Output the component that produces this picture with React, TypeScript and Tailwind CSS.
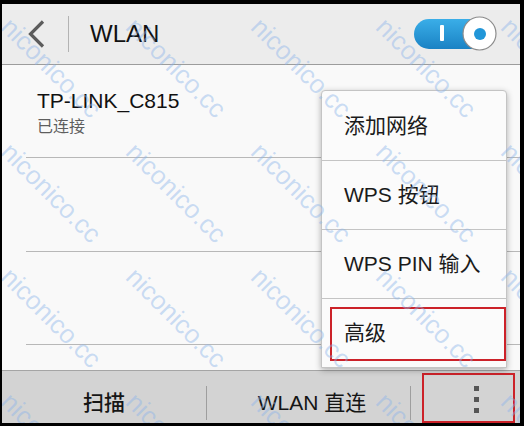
import React from 'react';

const font = { fontFamily: '"Liberation Sans", Arial, "Noto Sans CJK SC", sans-serif' };

const marks: { x: number; y: number }[] = [];
for (let r = 0; r < 4; r++) {
    for (let c = 0; c < 5; c++) {
        marks.push({ x: 13 + c * 125, y: 9 + r * 125 });
    }
}

function Toggle() {
    return (
        <svg width="84" height="36" viewBox="0 0 84 36">
            <defs>
                <linearGradient id="pill" x1="0" y1="0" x2="0" y2="1">
                    <stop offset="0" stopColor="#3aaee8" />
                    <stop offset="1" stopColor="#1a82c4" />
                </linearGradient>
            </defs>
            <rect x="0" y="3" width="72" height="30" rx="15" fill="url(#pill)" />
            <rect x="26" y="9" width="4" height="16" rx="1" fill="#ffffff" />
            <circle cx="65.5" cy="17.5" r="16.5" fill="#ffffff" stroke="#8c8c8c" strokeWidth="1.2" />
            <circle cx="66" cy="18" r="6" fill="#2196d8" />
        </svg>
    );
}

export default function App() {
    return (
        <div className="w-[524px] h-[426px] bg-black pt-[4px] pl-[2px] pr-[4px] pb-[3px]" style={font}>
            <div className="relative w-full h-full flex flex-col overflow-hidden bg-[#f9f9f9]">
                {/* Header */}
                <div className="h-[61px] shrink-0 flex items-center bg-[#ececec] border-b border-[#9c9c9c]">
                    <svg className="ml-[25px]" width="18" height="28" viewBox="0 0 18 28">
                        <path d="M16 1.5 L3.5 14 L16 26.5" fill="none" stroke="#5c5c5c" strokeWidth="3.2" strokeLinejoin="miter" />
                    </svg>
                    <div className="ml-[23px] w-px h-[36px] bg-[#b3b3b3]" />
                    <span className="ml-[21px] text-[24px] leading-none text-[#111]">WLAN</span>
                    <div className="flex-1" />
                    <div className="mr-[22px]">
                        <Toggle />
                    </div>
                </div>

                {/* List */}
                <div className="flex-1 relative">
                    <div className="h-[92px] pl-[35px] pt-[24px]">
                        <div className="text-[21px] leading-[24px] text-[#111]">TP-LINK_C815</div>
                        <div className="mt-[4px] text-[16px] leading-[20px] text-[#5e5e5e]">已连接</div>
                    </div>
                    <div className="ml-[24px] h-px bg-[#b8b8b8]" />
                    <div className="h-[93px]" />
                    <div className="ml-[24px] h-px bg-[#b8b8b8]" />
                    <div className="h-[92px]" />
                    <div className="ml-[24px] h-px bg-[#b8b8b8]" />
                </div>

                {/* Bottom bar */}
                <div className="h-[53px] shrink-0 flex items-end bg-[#d3d3d3] border-t border-[#a5a5a5] text-[21px] text-[#151515]">
                    <div className="w-[204px] h-full flex items-center justify-center pt-[12px] font-medium">扫描</div>
                    <div className="w-px h-[34px] mb-[3px] bg-[#9e9e9e]" />
                    <div className="w-[203px] h-full flex items-center justify-center pt-[12px] pl-[7px]">WLAN 直连</div>
                    <div className="w-px h-[34px] mb-[3px] bg-[#9e9e9e]" />
                    <div className="relative flex-1 h-full flex flex-col items-center justify-center gap-[6px] pl-[21px] pt-[4px]">
                        <div className="w-[5px] h-[5px] bg-[#555]" />
                        <div className="w-[5px] h-[5px] bg-[#555]" />
                        <div className="w-[5px] h-[5px] bg-[#555]" />
                        <div className="absolute left-[11px] right-[5px] top-[2px] bottom-0 border-2 border-[#cc2229]" />
                    </div>
                </div>

                {/* Overflow menu */}
                <div className="absolute left-[319px] top-[86px] w-[186px] bg-[#fbfbfb] border border-[#c4c4c4] rounded-t-[4px] shadow-[0_2px_6px_rgba(0,0,0,0.3)] text-[21px] text-[#1a1a1a]">
                    <div className="h-[69px] flex items-center pl-[22px]">添加网络</div>
                    <div className="h-[69px] flex items-center pl-[22px] border-t border-[#c4c4c4]">WPS 按钮</div>
                    <div className="h-[69px] flex items-center pl-[22px] border-t border-[#c4c4c4]">WPS PIN 输入</div>
                    <div className="relative h-[69px] flex items-center pl-[22px] border-t border-[#c4c4c4]">
                        高级
                        <div className="absolute left-[8px] right-0 top-[8px] bottom-[6px] border-2 border-[#cc2229]" />
                    </div>
                </div>

                {/* Watermark */}
                <div className="absolute inset-0 pointer-events-none">
                    {marks.map((m, i) => (
                        <span
                            key={i}
                            className="absolute origin-top-left rotate-45 whitespace-nowrap text-[26px] leading-none text-[#8db5ea]/45"
                            style={{ left: m.x, top: m.y }}
                        >
                            niconico.cc
                        </span>
                    ))}
                </div>
            </div>
        </div>
    );
}
